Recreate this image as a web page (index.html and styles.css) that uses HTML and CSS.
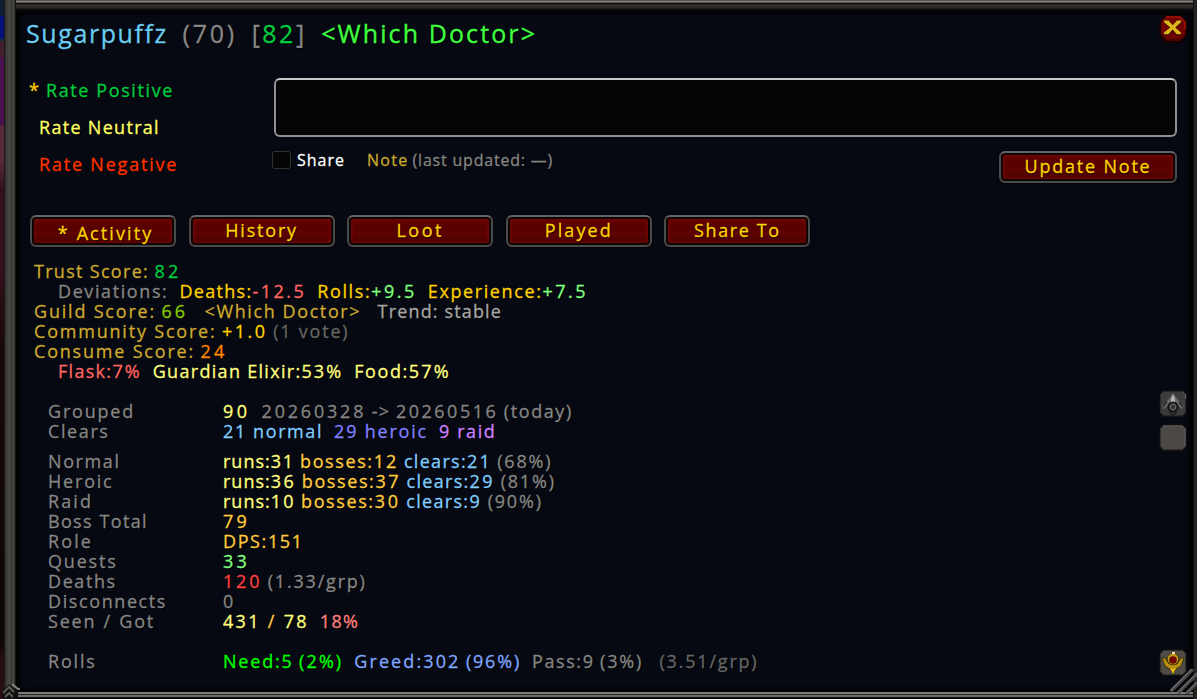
FILE: index.html
```html
<!DOCTYPE html>
<html lang="en">
<head>
<meta charset="UTF-8">
<meta name="viewport" content="width=device-width, initial-scale=1.0">
<title>Player Details</title>
<link rel="stylesheet" href="styles.css">
</head>
<body>
<div class="world"></div>
<div class="edge-left"></div>
<div class="frame">
    <div class="edge-top"></div>
    <div class="panel">
        <div class="main">
            <h1 class="title"><span class="blue-name t16">Sugarpuffz</span>&nbsp; <span class="gray t28">(70)</span>&nbsp; <span class="gray t25">[<span class="good">82</span>]</span>&nbsp; <span class="guild t20">&lt;Which Doctor&gt;</span></h1>

            <div class="rating">
                <div class="rates">
                    <a class="good t16"><i class="star">*</i>Rate Positive</a>
                    <a class="neutral t13">Rate Neutral</a>
                    <a class="bad">Rate Negative</a>
                </div>
                <div class="note">
                    <div class="note-box"></div>
                    <div class="note-bar">
                        <span class="check"></span>
                        <span class="share t10">Share</span>
                        <span class="gold t13">Note</span>
                        <span class="gray t8">(last updated: —)</span>
                        <button class="btn update">Update Note</button>
                    </div>
                </div>
            </div>

            <div class="tabs">
                <button class="btn active"><i>*</i>Activity</button>
                <button class="btn">History</button>
                <button class="btn t25">Loot</button>
                <button class="btn t20">Played</button>
                <button class="btn t16">Share To</button>
            </div>

            <div class="scores">
                <p><span class="gold t13">Trust Score:</span> <span class="good t33">82</span></p>
                <p class="sub"><span class="gray t16">Deviations:</span>&nbsp; <span class="yellow t13">Deaths:</span><span class="red t25">-12.5</span>&nbsp; <span class="yellow t16">Rolls:</span><span class="mint t25">+9.5</span>&nbsp; <span class="yellow t16">Experience:</span><span class="mint t25">+7.5</span></p>
                <p><span class="gold">Guild Score:</span> <span class="lime t30">66</span>&nbsp;&nbsp; <span class="gold t16">&lt;Which Doctor&gt;</span>&nbsp;&nbsp; <span class="silver t12">Trend: stable</span></p>
                <p><span class="gold">Community Score:</span> <span class="yellow t25">+1.0</span> <span class="dim">(1 vote)</span></p>
                <p><span class="gold">Consume Score:</span> <span class="orange t33">24</span></p>
                <p class="sub"><span class="red t13">Flask:</span><span class="red t20">7%</span>&nbsp; <span class="pale t13">Guardian Elixir:</span><span class="pale t20">53%</span>&nbsp; <span class="pale t16">Food:</span><span class="pale t20">57%</span></p>
            </div>

            <div class="stats">
                <p><b>Grouped</b><span class="pale t35">90</span>&nbsp; <span class="gray t28">20260328</span> <span class="gray t13">-&gt;</span> <span class="gray t25">20260516</span> <span class="gray t16">(today)</span></p>
                <p class="last"><b class="t16">Clears</b><span class="sky t16">21 normal</span>&nbsp; <span class="violet">29 heroic</span>&nbsp; <span class="purple t16">9 raid</span></p>
                <p><b class="t16">Normal</b><span class="pale t10">runs:</span><span class="pale t16">31</span> <span class="amber t16">bosses:</span><span class="amber t20">12</span> <span class="sky t13">clears:</span><span class="sky t20">21</span> <span class="gray">(68%)</span></p>
                <p><b>Heroic</b><span class="pale t10">runs:</span><span class="pale t25">36</span> <span class="amber t16">bosses:</span><span class="amber t25">37</span> <span class="sky t13">clears:</span><span class="sky t25">29</span> <span class="gray">(81%)</span></p>
                <p><b class="t20">Raid</b><span class="pale t10">runs:</span><span class="pale t20">10</span> <span class="amber t16">bosses:</span><span class="amber t28">30</span> <span class="sky t13">clears:</span><span class="sky t25">9</span> <span class="gray">(90%)</span></p>
                <p><b class="t13">Boss Total</b><span class="amber t33">79</span></p>
                <p><b class="t20">Role</b><span class="amber t16">DPS:151</span></p>
                <p><b>Quests</b><span class="mint t33">33</span></p>
                <p><b class="t16">Deaths</b><span class="crimson t28">120</span> <span class="gray">(1.33/grp)</span></p>
                <p><b class="t16">Disconnects</b><span class="gray">0</span></p>
                <p class="last2"><b>Seen / Got</b><span class="pale t22">431 <span class="amber">/</span> 78</span>&nbsp; <span class="salmon t13">18%</span></p>
                <p><b>Rolls</b><span class="need">Need:5</span> <span class="need t20">(2%)</span>&nbsp; <span class="greed t20">Greed:302</span> <span class="greed">(96%)</span>&nbsp; <span class="gray t16">Pass:9</span> <span class="gray">(3%)</span>&nbsp;&nbsp; <span class="dim">(3.51/grp)</span></p>
            </div>
        </div>

        <div class="side">
            <svg class="close" width="30" height="30" viewBox="0 0 30 30">
                <path d="M7 1H23L29 7V22L23 29H7L1 22V7Z" fill="#150000"/>
                <path d="M8 2.500H22L27.500 8V21L22 27H8L3 21V8Z" fill="#6c0502"/>
                <path d="M8 3H22L27 8V15" fill="none" stroke="#a81208" stroke-width="1.500"/>
                <path d="M3.500 20L8 26H22L27 21" fill="none" stroke="#3b0000" stroke-width="1.500"/>
                <path d="M6 7H11.500L15 11L18.500 7H23.500V9L17.800 14L23 19.500V21.500H18.500L15 17.500L11 21.500H6V19.500L12 14L6 9Z" fill="#3a0900"/>
                <path d="M6 6.500H10.500L14.800 11.200L19 6.500H23V8.200L17.200 13.400L22.800 18.500V20.300H18.800L14.600 15.600L10.500 20.300H6V18.500L12.300 13.500L6 8.200Z" fill="#dcb71c"/>
            </svg>
            <svg class="icon up" width="28" height="28" viewBox="0 0 28 28">
                <path d="M4 .5H24L27.500 4V23L24 27H4L.5 23V4Z" fill="#151515"/>
                <path d="M4.500 1.500H23.500L26.500 4.500V22.500L23.500 25.500H4.500L1.500 22.500V4.500Z" fill="#3c3c3c"/>
                <path d="M23 1.500L26.500 5V9" fill="none" stroke="#6b6b6b"/>
                <path d="M14 3L18 9L25 16L23.500 19L18 15L16 12H12L10 15L4.500 19L3 16L10 9Z" fill="#6c6c6c"/>
                <path d="M14 4L16 9V13H12V9Z" fill="#b2b2b2"/>
                <path d="M8 12L4 17M20 12L24 17" stroke="#222" stroke-width="1.300"/>
                <circle cx="14" cy="17" r="4.800" fill="#333" stroke="#151515" stroke-width="1.600"/>
                <circle cx="14" cy="17" r="2.600" fill="#2b2b2b" stroke="#6e6e6e"/>
                <path d="M10 22L14 25L18 22" fill="none" stroke="#202020" stroke-width="1.500"/>
            </svg>
            <svg class="icon blank" width="28" height="28" viewBox="0 0 28 28">
                <path d="M4 .5H24L27.500 4V23L24 27H4L.5 23V4Z" fill="#141414"/>
                <path d="M4.500 1.500H23.500L26.500 4.500V22.500L23.500 25.500H4.500L1.500 22.500V4.500Z" fill="#4b4845"/>
                <path d="M4.500 2H23L26 5V22" fill="none" stroke="#5f5c58"/>
                <path d="M6 9L11 7L15 10M9 18L14 15L20 17" fill="none" stroke="#504d49"/>
            </svg>
            <svg class="icon down" width="28" height="28" viewBox="0 0 28 28">
                <path d="M4 .5H24L27.500 4V23L24 27H4L.5 23V4Z" fill="#141414"/>
                <path d="M4.500 1.500H23.500L26.500 4.500V22.500L23.500 25.500H4.500L1.500 22.500V4.500Z" fill="#4f4c46"/>
                <path d="M3 9L6 9L10 15H18L22 9L25 9L22 17L17 20L14 25L11 20L6 17Z" fill="#b9910f" stroke="#312607" stroke-width=".8"/>
                <path d="M14 25L11 19L14 20L17 19Z" fill="#e7bb1c"/>
                <circle cx="14" cy="10" r="5.800" fill="#bd9714" stroke="#3b2d08" stroke-width=".8"/>
                <circle cx="14" cy="11" r="3.800" fill="#6f0905"/>
                <rect x="13" y="3" width="3" height="2" fill="#eee3b0"/>
            </svg>
            <svg class="grip" width="27" height="25" viewBox="0 0 27 25">
                <path d="M1 22L23 0M8 24L27 5M16 25L27 14" stroke="#4c4a48" stroke-width="3.500"/>
                <path d="M0 22L22 0M7 24L27 4M15 25L27 13" stroke="#777573" stroke-width="1"/>
            </svg>
        </div>
    </div>
    <div class="edge-bottom"></div>
</div>
<div class="edge-right"></div>
<svg class="corner" width="20" height="16" viewBox="0 0 20 16">
    <path d="M2 8L9 1L18 8V16H2Z" fill="#11110f"/>
    <path d="M3 10L9 4L14 9M5 14L9 10L13 14" fill="none" stroke="#5c5a56" stroke-width="2"/>
    <path d="M12 1L18 6H20" fill="none" stroke="#85827d" stroke-width="2"/>
</svg>
</body>
</html>
```
FILE: styles.css
```css
* {
    box-sizing: border-box;
}
body {
    margin: 0;
    width: 1197px;
    height: 699px;
    display: flex;
    overflow: hidden;
    background: #060911;
    font: 18px/20px "Open Sans", "Noto Sans", sans-serif;
    letter-spacing: 0;
    text-shadow: 1px 1px 1px #000;
    -webkit-text-stroke: 0.3px;
}
h1, p {
    margin: 0;
    font-weight: normal;
    white-space: pre;
    word-spacing: 0.8px;
}
p span, h1 span {
    word-spacing: 0;
}

/* Frame edges */
.world {
    width: 4px;
    background: linear-gradient(#0b1f33 0 15px, #06107a 17px 38px, #1d2a30 40px, #45202c 43px 55px, #4a1050 60px 124px, #572a3a 126px 160px, #33101c 190px 270px, #180708 350px, #0c0606 640px, #2a0d12 660px);
}
.edge-left {
    width: 12px;
    background: linear-gradient(90deg, #121110, #3a3935 2px, #4c4a45 6px, #2c2b27 8px, #5a5853 9px, #3f3d39 10px, #0a0a0a 12px);
}
.frame {
    flex: 1;
    display: flex;
    flex-direction: column;
}
.edge-top {
    height: 12px;
    background: linear-gradient(#56524f 0 1px, #85817f 1px 2px, #54504e 2px 3px, #0c0b0b 3px 4px, #242321 4px, #33312f 6px, #232220 8px, #060606 10px, #04060a 12px);
}
.edge-bottom {
    height: 8px;
    background: linear-gradient(#050505 0 1px, #7d7a76 1px 3px, #2a2826 3px 4px, #6b6865 4px 6px, #151413 6px 7px, #000 7px);
}
.edge-right {
    width: 4px;
    background: linear-gradient(90deg, #070708, #2d2a26 2px, #211e1b);
}
.corner {
    position: absolute;
    left: 0;
    bottom: 0;
}
.panel {
    flex: 1;
    display: flex;
    box-shadow: inset 3px 0 5px #000, inset -3px 0 5px #000;
}
.main {
    flex: 1;
    padding-left: 10px;
}

/* Header */
.title {
    font-size: 25px;
    line-height: 40px;
    height: 59px;
    padding-top: 1px;
    word-spacing: 0.8px;
}
.rating {
    display: flex;
    height: 144px;
}
.rates {
    width: 246px;
    padding: 1px 0 0 13px;
    display: flex;
    flex-direction: column;
}
.rates a {
    line-height: 37px;
    letter-spacing: 1.8px;
}
.rates a:first-child {
    margin-left: -10px;
}
.star {
    display: inline-block;
    width: 17px;
    font-style: normal;
    color: #ffc800;
}
.note {
    width: 905px;
    padding-top: 7px;
}
.note-box {
    height: 59px;
    margin-left: 2px;
    background: #030406;
    border: 2px solid #8f8f8f;
    border-top-color: #c8c8c8;
    border-radius: 6px;
}
.note-bar {
    display: flex;
    align-items: flex-start;
    padding-top: 14px;
    font-size: 16px;
}
.note-bar span {
    line-height: 19px;
}
.note-bar .check {
    width: 19px;
    height: 18px;
    background: #050505;
    border: 1px solid #33322f;
    border-radius: 3px;
}
.share {
    color: #fff;
    margin: 0 22px 0 6px;
}
.note-bar .gold {
    margin-right: 4px;
}

/* Buttons */
.btn {
    width: 146px;
    height: 32px;
    padding: 0 0 2px;
    border: 2px solid #4a4a4a;
    border-top-color: #666565;
    border-radius: 6px;
    background: linear-gradient(#680101, #560000 40%, #600202 60%, #420000);
    box-shadow: inset 0 0 0 2px #0d0505, inset 0 0 3px 3px #7a0804, 0 0 2px #000;
    color: #ffd100;
    font: 18px/20px "Open Sans", "Noto Sans", sans-serif;
    letter-spacing: 1.8px;
    text-shadow: 1px 1px 1px #000;
}
.btn.update {
    width: 178px;
    margin-left: auto;
}
.btn.active {
    padding: 4px 0 0 5px;
    letter-spacing: 2.1px;
}
.btn i {
    font-style: normal;
    margin-right: 7px;
}
.tabs {
    display: flex;
    gap: 12.6px;
    padding-left: 4px;
    height: 46px;
}

/* Text lines */
.scores {
    padding-left: 8px;
    height: 140px;
}
.scores p, .stats p {
    height: 20px;
}
.scores .sub {
    padding-left: 24px;
}
.stats {
    padding-left: 22px;
}
.stats b {
    display: inline-block;
    width: 175px;
    font-weight: normal;
    color: #868686;
}
.stats .last {
    margin-bottom: 10px;
}
.stats .last2 {
    margin-bottom: 20px;
}
.scores span, .stats b, .stats span {
    letter-spacing: 1.8px;
}

/* Right column */
.side {
    width: 35px;
    margin-left: -35px;
    display: flex;
    flex-direction: column;
}
.side svg {
    flex: none;
}
.close {
    margin: 2px 0 0 0;
}
.icon {
    margin-left: 1px;
}
.up {
    margin-top: 346px;
}
.blank {
    margin-top: 6px;
}
.down {
    margin-top: 197px;
}
.grip {
    position: absolute;
    right: 0;
    bottom: 5px;
}

/* Tracking */
.t8 { letter-spacing: 0.8px; }
.scores .t10, .stats .t10, .t10 { letter-spacing: 1px; }
.scores .t12 { letter-spacing: 1.15px; }
.scores .t13, .stats .t13, .rates .t13, .t13 { letter-spacing: 1.3px; }
.scores .t16, .stats .t16, .rates .t16, .t16 { letter-spacing: 1.6px; }
.scores .t20, .stats .t20, .t20 { letter-spacing: 2.1px; }
.stats .t22 { letter-spacing: 2.3px; }
.scores .t25, .stats .t25, .t25 { letter-spacing: 2.5px; }
.scores .t28, .stats .t28, .t28 { letter-spacing: 2.8px; }
.scores .t30, .stats .t30, .t30 { letter-spacing: 3px; }
.scores .t33, .stats .t33, .t33 { letter-spacing: 3.2px; }
.scores .t35, .stats .t35, .t35 { letter-spacing: 3.5px; }

/* Colors */
.blue-name { color: #69ccf0; }
.gray { color: #868686; }
.silver { color: #a6a6a6; }
.dim { color: #666; }
.good { color: #00cc40; }
.guild { color: #40ff40; }
.neutral { color: #ffff66; }
.bad { color: #ff3300; }
.gold { color: #ccaa33; }
.yellow { color: #ffd100; }
.amber { color: #ffcc40; }
.orange { color: #ff8800; }
.pale { color: #ffff80; }
.red { color: #ff6666; }
.salmon { color: #ff8080; }
.crimson { color: #ff4040; }
.mint { color: #80ff80; }
.lime { color: #8acc00; }
.sky { color: #80ccff; }
.violet { color: #8080ff; }
.purple { color: #cc80ff; }
.need { color: #00ff00; }
.greed { color: #80a6ff; }

.stats .pale .amber {
    letter-spacing: inherit;
}
```
